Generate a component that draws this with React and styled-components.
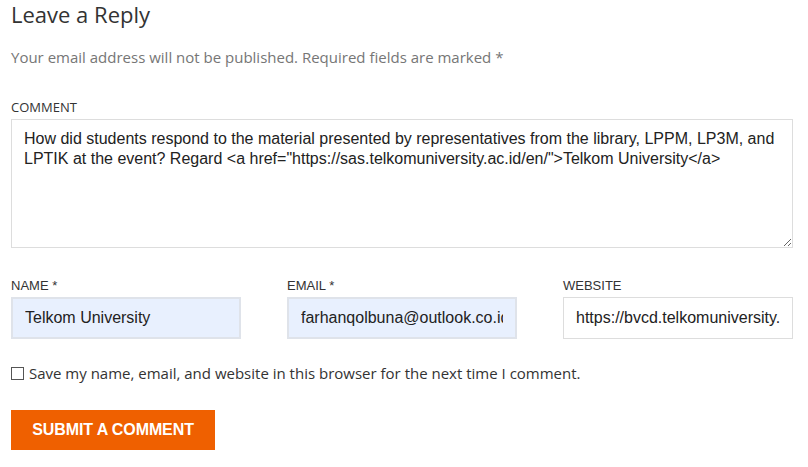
import React, { useState } from 'react'
import styled, { createGlobalStyle } from 'styled-components'

const GlobalStyle = createGlobalStyle`
  html, body {
    margin: 0;
    padding: 0;
    background: #fff;
  }
  body {
    font-family: "Open Sans", "Liberation Sans", sans-serif;
    color: #333;
  }
`

const App = () => {
  const [comment, setComment] = useState(
    'How did students respond to the material presented by representatives from the library, LPPM, LP3M, and LPTIK at the event? Regard <a href="https://sas.telkomuniversity.ac.id/en/">Telkom University</a>'
  )
  const [fields, setFields] = useState({
    name: 'Telkom University',
    email: 'farhanqolbuna@outlook.co.id',
    website: 'https://bvcd.telkomuniversity.ac.id/',
  })

  const update = (key) => (e) => setFields({ ...fields, [key]: e.target.value })

  return (
    <>
      <GlobalStyle />
      <Form onSubmit={(e) => e.preventDefault()}>
        <Title>Leave a Reply</Title>
        <Notes>Your email address will not be published. Required fields are marked *</Notes>

        <Label htmlFor="comment">Comment</Label>
        <TextArea id="comment" value={comment} onChange={(e) => setComment(e.target.value)} />

        <FieldRow>
          <Field>
            <SmallLabel htmlFor="author">Name *</SmallLabel>
            <Input id="author" $filled value={fields.name} onChange={update('name')} />
          </Field>
          <Field>
            <SmallLabel htmlFor="email">Email *</SmallLabel>
            <Input id="email" $filled value={fields.email} onChange={update('email')} />
          </Field>
          <Field>
            <SmallLabel htmlFor="url">Website</SmallLabel>
            <Input id="url" value={fields.website} onChange={update('website')} />
          </Field>
        </FieldRow>

        <Consent>
          <Box type="checkbox" />
          <span>Save my name, email, and website in this browser for the next time I comment.</span>
        </Consent>

        <Submit type="submit">Submit a Comment</Submit>
      </Form>
    </>
  )
}

const Form = styled.form`
  display: flex;
  flex-direction: column;
  align-items: flex-start;
  width: 782px;
  padding: 0 0 0 11px;
`

const Title = styled.h3`
  margin: 0;
  font-family: "Open Sans", sans-serif;
  font-weight: 400;
  font-size: 22px;
  line-height: 28px;
  color: #333;
`

const Notes = styled.p`
  margin: 15px 0 0;
  font-size: 15px;
  line-height: 28px;
  color: #767676;
`

const Label = styled.label`
  margin-top: 27px;
  font-size: 13px;
  line-height: 18px;
  text-transform: uppercase;
  color: #333;
`

const TextArea = styled.textarea`
  box-sizing: border-box;
  width: 782px;
  height: 129px;
  margin: 3px 0 0;
  padding: 9px 12px 7px;
  border: 1px solid #ddd;
  border-radius: 0;
  font-family: "Liberation Sans", Arial, sans-serif;
  font-size: 16px;
  line-height: 20px;
  color: #222;
  resize: vertical;
  outline: none;
`

const FieldRow = styled.div`
  display: grid;
  grid-template-columns: repeat(3, 230px);
  column-gap: 46px;
  margin-top: 30px;
`

const Field = styled.div`
  display: flex;
  flex-direction: column;
`

const SmallLabel = styled.label`
  font-family: "Liberation Sans", Arial, sans-serif;
  font-size: 13px;
  line-height: 16px;
  text-transform: uppercase;
  color: #333;
  margin-bottom: 3px;
`

const Input = styled.input`
  box-sizing: border-box;
  width: 230px;
  height: 42px;
  padding: 0 12px;
  border-style: solid;
  border-width: ${(p) => (p.$filled ? '2px' : '1px')};
  border-color: ${(p) => (p.$filled ? '#dfe3ea' : '#ddd')};
  background: ${(p) => (p.$filled ? '#e8f0fe' : '#fff')};
  font-family: "Liberation Sans", Arial, sans-serif;
  font-size: 16px;
  color: #222;
  outline: none;
`

const Consent = styled.label`
  display: flex;
  align-items: center;
  gap: 5px;
  margin-top: 24px;
  font-size: 15px;
  line-height: 20px;
  color: #333;
`

const Box = styled.input`
  appearance: none;
  width: 13px;
  height: 13px;
  margin: 0;
  border: 1px solid #555;
  background: #fff;
`

const Submit = styled.button`
  margin-top: 27px;
  width: 204px;
  height: 40px;
  border: none;
  border-radius: 0;
  background: #ef6000;
  color: #fff;
  font-family: "Liberation Sans", Arial, sans-serif;
  font-weight: 700;
  font-size: 16px;
  text-transform: uppercase;
  letter-spacing: -0.1px;
  cursor: pointer;
`

export default App
